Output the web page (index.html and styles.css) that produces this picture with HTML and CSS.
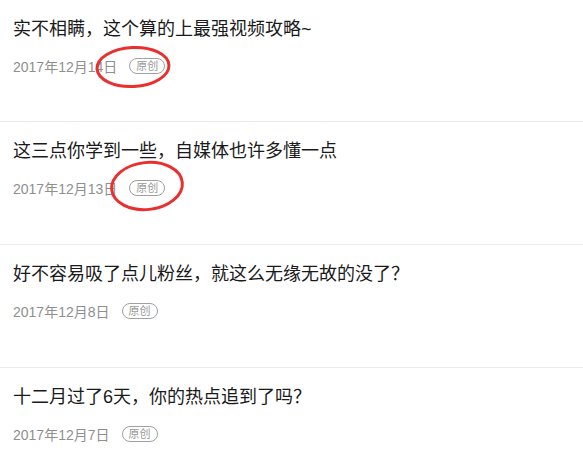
FILE: index.html
```html
<!DOCTYPE html>
<html lang="zh-CN">
<head>
  <meta charset="UTF-8" />
  <title>文章列表</title>
  <link rel="stylesheet" href="styles.css">
</head>
<body>
  <ul class="article-list">
    <li class="article">
      <p class="title">实不相瞒，这个算的上最强视频攻略~</p>
      <div class="meta">
        <span class="date">2017年12月14日</span>
        <span class="tag">原创</span>
      </div>
      <svg class="mark mark-1" width="80" height="46" viewBox="0 0 80 46">
        <ellipse cx="40" cy="23" rx="36" ry="19.5" transform="rotate(-3 40 23)" />
      </svg>
    </li>
    <li class="article">
      <p class="title">这三点你学到一些，自媒体也许多懂一点</p>
      <div class="meta">
        <span class="date">2017年12月13日</span>
        <span class="tag">原创</span>
      </div>
      <svg class="mark mark-2" width="80" height="54" viewBox="0 0 80 54">
        <ellipse cx="40" cy="27" rx="35.5" ry="23.5" transform="rotate(-6 40 27)" />
      </svg>
    </li>
    <li class="article">
      <p class="title">好不容易吸了点儿粉丝，就这么无缘无故的没了？</p>
      <div class="meta">
        <span class="date">2017年12月8日</span>
        <span class="tag">原创</span>
      </div>
    </li>
    <li class="article">
      <p class="title">十二月过了6天，你的热点追到了吗？</p>
      <div class="meta">
        <span class="date">2017年12月7日</span>
        <span class="tag">原创</span>
      </div>
    </li>
  </ul>
</body>
</html>
```

FILE: styles.css
```css
body {
  margin: 0;
  background: #fff;
  font-family: 'Liberation Sans', 'Noto Sans CJK SC', sans-serif;
}
.article-list {
  list-style: none;
  margin: 0;
  padding: 0;
}
.article {
  position: relative;
  height: 123px;
  padding: 16px 13px 0;
  box-sizing: border-box;
  border-bottom: 1px solid #ececec;
}
.article:first-child {
  height: 122px;
}
.title {
  margin: 0;
  font-size: 18px;
  line-height: 26px;
  color: #1a1a1a;
}
.meta {
  display: flex;
  align-items: center;
  margin-top: 14px;
  height: 20px;
}
.date {
  font-size: 14px;
  color: #8f8f8f;
}
.tag {
  margin-left: 12px;
  padding: 0 6px;
  height: 14px;
  line-height: 14px;
  border: 1px solid #a0a0a0;
  border-radius: 8px;
  font-size: 11px;
  color: #999;
}
.mark {
  position: absolute;
}
.mark ellipse {
  fill: none;
  stroke: #e9302e;
  stroke-width: 3;
}
.mark-1 {
  left: 93px;
  top: 44px;
}
.mark-2 {
  left: 107px;
  top: 37px;
}
```
